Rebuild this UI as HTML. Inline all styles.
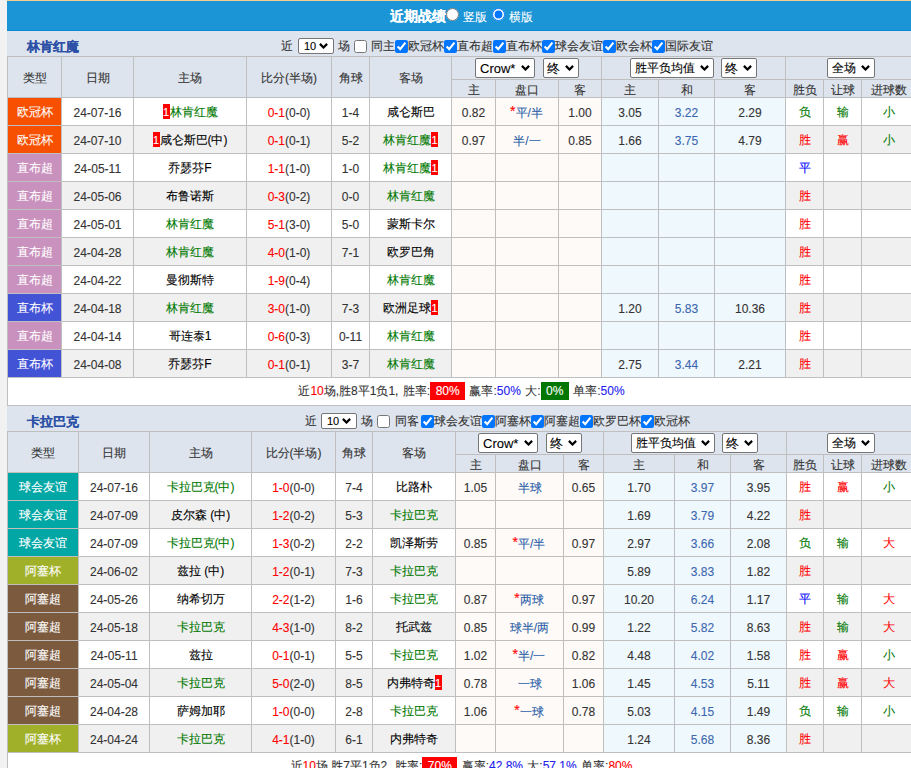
<!DOCTYPE html><html><head><meta charset="utf-8"><style>
*{box-sizing:border-box}
html,body{margin:0;padding:0;overflow:hidden}
body{width:911px;height:768px;background:#f2f2f2;font-family:"Liberation Sans",sans-serif;font-size:12px;color:#333;position:relative;-webkit-text-stroke-width:0.1px}
.topline{position:absolute;left:7px;top:0;width:910px;height:1px;background:#f6cf90}
.bar{position:absolute;left:7px;top:1px;width:910px;height:30px;background:#1b95d6;border-bottom:1px solid #0c89d2}
.title{position:absolute;left:0;top:1px;width:924px;height:30px;line-height:30px;text-align:center;color:#fff;font-size:14px}
.title b{font-weight:bold}
.grid{position:absolute;background:#bfbfbf}
.strip{position:absolute;left:7px;width:910px;background:#dde4ed}
.tname{position:absolute;left:27px;height:25px;line-height:32px;font-size:13px;font-weight:bold;color:#2c50a6}
.filters{position:absolute;left:281px;height:25px;line-height:25px;font-size:12px;color:#333;white-space:nowrap}
.c{position:absolute;text-align:center;white-space:nowrap;overflow:hidden}
.h{color:#333}
.ty{color:#fff}
.g{color:#007800}
.k{color:#000}
.r{color:#f00}
.rc{display:inline-block;background:#f00;color:#fff;width:7px;height:15px;line-height:17px;font-size:11px;text-align:center;vertical-align:top;position:relative;top:6px}
.hk{color:#2a5ea8}
.mid{color:#3c67b0}
.sum{text-align:center;word-spacing:1px}
.ab{position:absolute;white-space:nowrap}
.sl{position:absolute;color:#000;background:#fff;border:1px solid #767676;border-radius:2px;white-space:nowrap}
.chev{position:absolute}
.cb{position:absolute;margin:0;width:13px;height:13px}
.rd{position:absolute;margin:0;width:13px;height:13px}
.box{display:inline-block;color:#fff;padding:0 5.5px;line-height:18px;vertical-align:top;margin-top:4px;height:18px}
.rb{background:#f00}
.gb{background:#070}
.bl{color:#22e}
.st{font-size:14px;line-height:1px;position:relative;top:-1px;margin-left:-1px}
</style></head><body>
<div class="topline"></div><div class="bar"></div>
<span class="ab" style="left:390px;top:1px;color:#fff;font-size:14px;line-height:30px"><b>近期战绩</b></span>
<input type="radio" class="rd" style="left:446px;top:8px">
<span class="ab" style="left:463px;top:2px;color:#fff;font-size:12px;line-height:30px">竖版</span>
<input type="radio" class="rd" checked style="left:492px;top:8px">
<span class="ab" style="left:509px;top:2px;color:#fff;font-size:12px;line-height:30px">横版</span>
<div class="grid" style="left:7px;top:56px;width:910px;height:350px"></div>
<div class="strip" style="top:31px;height:25px"></div>
<div class="tname" style="top:31px">林肯红魔</div>
<span class="ab" style="left:281px;top:34px;line-height:25px">近</span>
<div class="sl" style="left:298px;top:38px;width:36px;height:16px;line-height:15px;font-size:11px"><span style="position:absolute;left:5px;top:0">10</span><svg class="chev" width="9" height="6" viewBox="0 0 9 6" style="right:5px;top:4px"><path d="M0.9 0.9 L4.5 4.5 L8.1 0.9" fill="none" stroke="#000" stroke-width="2.2"/></svg></div>
<span class="ab" style="left:338px;top:34px;line-height:25px">场</span>
<input type="checkbox" class="cb" style="left:354px;top:40px">
<span class="ab" style="left:371px;top:34px;line-height:25px">同主</span>
<input type="checkbox" class="cb" style="left:395px;top:40px" checked>
<span class="ab" style="left:408px;top:34px;line-height:25px">欧冠杯</span>
<input type="checkbox" class="cb" style="left:444px;top:40px" checked>
<span class="ab" style="left:457px;top:34px;line-height:25px">直布超</span>
<input type="checkbox" class="cb" style="left:493px;top:40px" checked>
<span class="ab" style="left:506px;top:34px;line-height:25px">直布杯</span>
<input type="checkbox" class="cb" style="left:542px;top:40px" checked>
<span class="ab" style="left:555px;top:34px;line-height:25px">球会友谊</span>
<input type="checkbox" class="cb" style="left:603px;top:40px" checked>
<span class="ab" style="left:616px;top:34px;line-height:25px">欧会杯</span>
<input type="checkbox" class="cb" style="left:652px;top:40px" checked>
<span class="ab" style="left:665px;top:34px;line-height:25px">国际友谊</span>
<div class="c h" style="left:8px;top:57px;width:53px;height:40px;line-height:42px;background:#dde4ed;">类型</div>
<div class="c h" style="left:62px;top:57px;width:71px;height:40px;line-height:42px;background:#dde4ed;">日期</div>
<div class="c h" style="left:134px;top:57px;width:112px;height:40px;line-height:42px;background:#dde4ed;">主场</div>
<div class="c h" style="left:247px;top:57px;width:84px;height:40px;line-height:42px;background:#dde4ed;">比分(半场)</div>
<div class="c h" style="left:332px;top:57px;width:37px;height:40px;line-height:42px;background:#dde4ed;">角球</div>
<div class="c h" style="left:370px;top:57px;width:81px;height:40px;line-height:42px;background:#dde4ed;">客场</div>
<div class="c h" style="left:452px;top:57px;width:149px;height:22px;line-height:24px;background:#dde4ed;"></div>
<div class="c h" style="left:602px;top:57px;width:183px;height:22px;line-height:24px;background:#dde4ed;"></div>
<div class="c h" style="left:786px;top:57px;width:129px;height:22px;line-height:24px;background:#dde4ed;"></div>
<div class="sl" style="left:475px;top:58px;width:60px;height:20px;line-height:19px;font-size:13px"><span style="position:absolute;left:4px;top:0">Crow*</span><svg class="chev" width="9" height="6" viewBox="0 0 9 6" style="right:4px;top:6px"><path d="M0.9 0.9 L4.5 4.5 L8.1 0.9" fill="none" stroke="#000" stroke-width="2.2"/></svg></div>
<div class="sl" style="left:543px;top:58px;width:36px;height:20px;line-height:19px;font-size:13px"><span style="position:absolute;left:3px;top:0">终</span><svg class="chev" width="9" height="6" viewBox="0 0 9 6" style="right:4px;top:6px"><path d="M0.9 0.9 L4.5 4.5 L8.1 0.9" fill="none" stroke="#000" stroke-width="2.2"/></svg></div>
<div class="sl" style="left:630px;top:58px;width:84px;height:20px;line-height:19px;font-size:12px"><span style="position:absolute;left:4px;top:0">胜平负均值</span><svg class="chev" width="9" height="6" viewBox="0 0 9 6" style="right:4px;top:6px"><path d="M0.9 0.9 L4.5 4.5 L8.1 0.9" fill="none" stroke="#000" stroke-width="2.2"/></svg></div>
<div class="sl" style="left:721px;top:58px;width:36px;height:20px;line-height:19px;font-size:13px"><span style="position:absolute;left:3px;top:0">终</span><svg class="chev" width="9" height="6" viewBox="0 0 9 6" style="right:4px;top:6px"><path d="M0.9 0.9 L4.5 4.5 L8.1 0.9" fill="none" stroke="#000" stroke-width="2.2"/></svg></div>
<div class="sl" style="left:827px;top:58px;width:48px;height:20px;line-height:19px;font-size:12px"><span style="position:absolute;left:4px;top:0">全场</span><svg class="chev" width="9" height="6" viewBox="0 0 9 6" style="right:4px;top:6px"><path d="M0.9 0.9 L4.5 4.5 L8.1 0.9" fill="none" stroke="#000" stroke-width="2.2"/></svg></div>
<div class="c h sh" style="left:452px;top:80px;width:43px;height:17px;line-height:21px;background:#dde4ed;">主</div>
<div class="c h sh" style="left:496px;top:80px;width:62px;height:17px;line-height:21px;background:#dde4ed;">盘口</div>
<div class="c h sh" style="left:559px;top:80px;width:42px;height:17px;line-height:21px;background:#dde4ed;">客</div>
<div class="c h sh" style="left:602px;top:80px;width:56px;height:17px;line-height:21px;background:#dde4ed;">主</div>
<div class="c h sh" style="left:659px;top:80px;width:55px;height:17px;line-height:21px;background:#dde4ed;">和</div>
<div class="c h sh" style="left:715px;top:80px;width:70px;height:17px;line-height:21px;background:#dde4ed;">客</div>
<div class="c h sh" style="left:786px;top:80px;width:37px;height:17px;line-height:21px;background:#dde4ed;">胜负</div>
<div class="c h sh" style="left:824px;top:80px;width:37px;height:17px;line-height:21px;background:#dde4ed;">让球</div>
<div class="c h sh" style="left:862px;top:80px;width:53px;height:17px;line-height:21px;background:#dde4ed;">进球数</div>
<div class="c ty" style="left:8px;top:98px;width:53px;height:27px;line-height:29px;background:#f75000;">欧冠杯</div>
<div class="c d" style="left:62px;top:98px;width:71px;height:27px;line-height:31px;background:#fff;">24-07-16</div>
<div class="c tm" style="left:134px;top:98px;width:112px;height:27px;line-height:29px;background:#fff;"><span class="g"><span class="rc">1</span>林肯红魔</span></div>
<div class="c sc" style="left:247px;top:98px;width:84px;height:27px;line-height:31px;background:#fff;"><span class="r">0-1</span>(0-0)</div>
<div class="c d" style="left:332px;top:98px;width:37px;height:27px;line-height:31px;background:#fff;">1-4</div>
<div class="c tm" style="left:370px;top:98px;width:81px;height:27px;line-height:29px;background:#fff;"><span class="k">咸仑斯巴</span></div>
<div class="c od" style="left:452px;top:98px;width:43px;height:27px;line-height:31px;background:#fefaf7;">0.82</div>
<div class="c od hk" style="left:496px;top:98px;width:62px;height:27px;line-height:30px;background:#fefaf7;"><span class="r st">*</span>平/半</div>
<div class="c od" style="left:559px;top:98px;width:42px;height:27px;line-height:31px;background:#fefaf7;">1.00</div>
<div class="c od" style="left:602px;top:98px;width:56px;height:27px;line-height:31px;background:#eff8fc;">3.05</div>
<div class="c od mid" style="left:659px;top:98px;width:55px;height:27px;line-height:31px;background:#eff8fc;">3.22</div>
<div class="c od" style="left:715px;top:98px;width:70px;height:27px;line-height:31px;background:#eff8fc;">2.29</div>
<div class="c rs" style="left:786px;top:98px;width:37px;height:27px;line-height:29px;background:#fff;"><span style="color:#007800">负</span></div>
<div class="c rs" style="left:824px;top:98px;width:37px;height:27px;line-height:29px;background:#fff;"><span style="color:#007800">输</span></div>
<div class="c rs" style="left:862px;top:98px;width:53px;height:27px;line-height:29px;background:#fff;"><span style="color:#007800">小</span></div>
<div class="c ty" style="left:8px;top:126px;width:53px;height:27px;line-height:29px;background:#f75000;">欧冠杯</div>
<div class="c d" style="left:62px;top:126px;width:71px;height:27px;line-height:31px;background:#f0f0f0;">24-07-10</div>
<div class="c tm" style="left:134px;top:126px;width:112px;height:27px;line-height:29px;background:#f0f0f0;"><span class="k"><span class="rc">1</span>咸仑斯巴(中)</span></div>
<div class="c sc" style="left:247px;top:126px;width:84px;height:27px;line-height:31px;background:#f0f0f0;"><span class="r">0-1</span>(0-1)</div>
<div class="c d" style="left:332px;top:126px;width:37px;height:27px;line-height:31px;background:#f0f0f0;">5-2</div>
<div class="c tm" style="left:370px;top:126px;width:81px;height:27px;line-height:29px;background:#f0f0f0;"><span class="g">林肯红魔<span class="rc">1</span></span></div>
<div class="c od" style="left:452px;top:126px;width:43px;height:27px;line-height:31px;background:#fefaf7;">0.97</div>
<div class="c od hk" style="left:496px;top:126px;width:62px;height:27px;line-height:30px;background:#fefaf7;">半/一</div>
<div class="c od" style="left:559px;top:126px;width:42px;height:27px;line-height:31px;background:#fefaf7;">0.85</div>
<div class="c od" style="left:602px;top:126px;width:56px;height:27px;line-height:31px;background:#eff8fc;">1.66</div>
<div class="c od mid" style="left:659px;top:126px;width:55px;height:27px;line-height:31px;background:#eff8fc;">3.75</div>
<div class="c od" style="left:715px;top:126px;width:70px;height:27px;line-height:31px;background:#eff8fc;">4.79</div>
<div class="c rs" style="left:786px;top:126px;width:37px;height:27px;line-height:29px;background:#f0f0f0;"><span style="color:#f00">胜</span></div>
<div class="c rs" style="left:824px;top:126px;width:37px;height:27px;line-height:29px;background:#f0f0f0;"><span style="color:#f00">赢</span></div>
<div class="c rs" style="left:862px;top:126px;width:53px;height:27px;line-height:29px;background:#f0f0f0;"><span style="color:#007800">小</span></div>
<div class="c ty" style="left:8px;top:154px;width:53px;height:27px;line-height:29px;background:#c991bd;">直布超</div>
<div class="c d" style="left:62px;top:154px;width:71px;height:27px;line-height:31px;background:#fff;">24-05-11</div>
<div class="c tm" style="left:134px;top:154px;width:112px;height:27px;line-height:29px;background:#fff;"><span class="k">乔瑟芬F</span></div>
<div class="c sc" style="left:247px;top:154px;width:84px;height:27px;line-height:31px;background:#fff;"><span class="r">1-1</span>(1-0)</div>
<div class="c d" style="left:332px;top:154px;width:37px;height:27px;line-height:31px;background:#fff;">1-0</div>
<div class="c tm" style="left:370px;top:154px;width:81px;height:27px;line-height:29px;background:#fff;"><span class="g">林肯红魔<span class="rc">1</span></span></div>
<div class="c od" style="left:452px;top:154px;width:43px;height:27px;line-height:31px;background:#fefaf7;"></div>
<div class="c od hk" style="left:496px;top:154px;width:62px;height:27px;line-height:30px;background:#fefaf7;"></div>
<div class="c od" style="left:559px;top:154px;width:42px;height:27px;line-height:31px;background:#fefaf7;"></div>
<div class="c od" style="left:602px;top:154px;width:56px;height:27px;line-height:31px;background:#eff8fc;"></div>
<div class="c od mid" style="left:659px;top:154px;width:55px;height:27px;line-height:31px;background:#eff8fc;"></div>
<div class="c od" style="left:715px;top:154px;width:70px;height:27px;line-height:31px;background:#eff8fc;"></div>
<div class="c rs" style="left:786px;top:154px;width:37px;height:27px;line-height:29px;background:#fff;"><span style="color:#00f">平</span></div>
<div class="c rs" style="left:824px;top:154px;width:37px;height:27px;line-height:29px;background:#fff;"><span style="color:#000"></span></div>
<div class="c rs" style="left:862px;top:154px;width:53px;height:27px;line-height:29px;background:#fff;"><span style="color:#000"></span></div>
<div class="c ty" style="left:8px;top:182px;width:53px;height:27px;line-height:29px;background:#c991bd;">直布超</div>
<div class="c d" style="left:62px;top:182px;width:71px;height:27px;line-height:31px;background:#f0f0f0;">24-05-06</div>
<div class="c tm" style="left:134px;top:182px;width:112px;height:27px;line-height:29px;background:#f0f0f0;"><span class="k">布鲁诺斯</span></div>
<div class="c sc" style="left:247px;top:182px;width:84px;height:27px;line-height:31px;background:#f0f0f0;"><span class="r">0-3</span>(0-2)</div>
<div class="c d" style="left:332px;top:182px;width:37px;height:27px;line-height:31px;background:#f0f0f0;">0-0</div>
<div class="c tm" style="left:370px;top:182px;width:81px;height:27px;line-height:29px;background:#f0f0f0;"><span class="g">林肯红魔</span></div>
<div class="c od" style="left:452px;top:182px;width:43px;height:27px;line-height:31px;background:#fefaf7;"></div>
<div class="c od hk" style="left:496px;top:182px;width:62px;height:27px;line-height:30px;background:#fefaf7;"></div>
<div class="c od" style="left:559px;top:182px;width:42px;height:27px;line-height:31px;background:#fefaf7;"></div>
<div class="c od" style="left:602px;top:182px;width:56px;height:27px;line-height:31px;background:#eff8fc;"></div>
<div class="c od mid" style="left:659px;top:182px;width:55px;height:27px;line-height:31px;background:#eff8fc;"></div>
<div class="c od" style="left:715px;top:182px;width:70px;height:27px;line-height:31px;background:#eff8fc;"></div>
<div class="c rs" style="left:786px;top:182px;width:37px;height:27px;line-height:29px;background:#f0f0f0;"><span style="color:#f00">胜</span></div>
<div class="c rs" style="left:824px;top:182px;width:37px;height:27px;line-height:29px;background:#f0f0f0;"><span style="color:#000"></span></div>
<div class="c rs" style="left:862px;top:182px;width:53px;height:27px;line-height:29px;background:#f0f0f0;"><span style="color:#000"></span></div>
<div class="c ty" style="left:8px;top:210px;width:53px;height:27px;line-height:29px;background:#c991bd;">直布超</div>
<div class="c d" style="left:62px;top:210px;width:71px;height:27px;line-height:31px;background:#fff;">24-05-01</div>
<div class="c tm" style="left:134px;top:210px;width:112px;height:27px;line-height:29px;background:#fff;"><span class="g">林肯红魔</span></div>
<div class="c sc" style="left:247px;top:210px;width:84px;height:27px;line-height:31px;background:#fff;"><span class="r">5-1</span>(3-0)</div>
<div class="c d" style="left:332px;top:210px;width:37px;height:27px;line-height:31px;background:#fff;">5-0</div>
<div class="c tm" style="left:370px;top:210px;width:81px;height:27px;line-height:29px;background:#fff;"><span class="k">蒙斯卡尔</span></div>
<div class="c od" style="left:452px;top:210px;width:43px;height:27px;line-height:31px;background:#fefaf7;"></div>
<div class="c od hk" style="left:496px;top:210px;width:62px;height:27px;line-height:30px;background:#fefaf7;"></div>
<div class="c od" style="left:559px;top:210px;width:42px;height:27px;line-height:31px;background:#fefaf7;"></div>
<div class="c od" style="left:602px;top:210px;width:56px;height:27px;line-height:31px;background:#eff8fc;"></div>
<div class="c od mid" style="left:659px;top:210px;width:55px;height:27px;line-height:31px;background:#eff8fc;"></div>
<div class="c od" style="left:715px;top:210px;width:70px;height:27px;line-height:31px;background:#eff8fc;"></div>
<div class="c rs" style="left:786px;top:210px;width:37px;height:27px;line-height:29px;background:#fff;"><span style="color:#f00">胜</span></div>
<div class="c rs" style="left:824px;top:210px;width:37px;height:27px;line-height:29px;background:#fff;"><span style="color:#000"></span></div>
<div class="c rs" style="left:862px;top:210px;width:53px;height:27px;line-height:29px;background:#fff;"><span style="color:#000"></span></div>
<div class="c ty" style="left:8px;top:238px;width:53px;height:27px;line-height:29px;background:#c991bd;">直布超</div>
<div class="c d" style="left:62px;top:238px;width:71px;height:27px;line-height:31px;background:#f0f0f0;">24-04-28</div>
<div class="c tm" style="left:134px;top:238px;width:112px;height:27px;line-height:29px;background:#f0f0f0;"><span class="g">林肯红魔</span></div>
<div class="c sc" style="left:247px;top:238px;width:84px;height:27px;line-height:31px;background:#f0f0f0;"><span class="r">4-0</span>(1-0)</div>
<div class="c d" style="left:332px;top:238px;width:37px;height:27px;line-height:31px;background:#f0f0f0;">7-1</div>
<div class="c tm" style="left:370px;top:238px;width:81px;height:27px;line-height:29px;background:#f0f0f0;"><span class="k">欧罗巴角</span></div>
<div class="c od" style="left:452px;top:238px;width:43px;height:27px;line-height:31px;background:#fefaf7;"></div>
<div class="c od hk" style="left:496px;top:238px;width:62px;height:27px;line-height:30px;background:#fefaf7;"></div>
<div class="c od" style="left:559px;top:238px;width:42px;height:27px;line-height:31px;background:#fefaf7;"></div>
<div class="c od" style="left:602px;top:238px;width:56px;height:27px;line-height:31px;background:#eff8fc;"></div>
<div class="c od mid" style="left:659px;top:238px;width:55px;height:27px;line-height:31px;background:#eff8fc;"></div>
<div class="c od" style="left:715px;top:238px;width:70px;height:27px;line-height:31px;background:#eff8fc;"></div>
<div class="c rs" style="left:786px;top:238px;width:37px;height:27px;line-height:29px;background:#f0f0f0;"><span style="color:#f00">胜</span></div>
<div class="c rs" style="left:824px;top:238px;width:37px;height:27px;line-height:29px;background:#f0f0f0;"><span style="color:#000"></span></div>
<div class="c rs" style="left:862px;top:238px;width:53px;height:27px;line-height:29px;background:#f0f0f0;"><span style="color:#000"></span></div>
<div class="c ty" style="left:8px;top:266px;width:53px;height:27px;line-height:29px;background:#c991bd;">直布超</div>
<div class="c d" style="left:62px;top:266px;width:71px;height:27px;line-height:31px;background:#fff;">24-04-22</div>
<div class="c tm" style="left:134px;top:266px;width:112px;height:27px;line-height:29px;background:#fff;"><span class="k">曼彻斯特</span></div>
<div class="c sc" style="left:247px;top:266px;width:84px;height:27px;line-height:31px;background:#fff;"><span class="r">1-9</span>(0-4)</div>
<div class="c d" style="left:332px;top:266px;width:37px;height:27px;line-height:31px;background:#fff;"></div>
<div class="c tm" style="left:370px;top:266px;width:81px;height:27px;line-height:29px;background:#fff;"><span class="g">林肯红魔</span></div>
<div class="c od" style="left:452px;top:266px;width:43px;height:27px;line-height:31px;background:#fefaf7;"></div>
<div class="c od hk" style="left:496px;top:266px;width:62px;height:27px;line-height:30px;background:#fefaf7;"></div>
<div class="c od" style="left:559px;top:266px;width:42px;height:27px;line-height:31px;background:#fefaf7;"></div>
<div class="c od" style="left:602px;top:266px;width:56px;height:27px;line-height:31px;background:#eff8fc;"></div>
<div class="c od mid" style="left:659px;top:266px;width:55px;height:27px;line-height:31px;background:#eff8fc;"></div>
<div class="c od" style="left:715px;top:266px;width:70px;height:27px;line-height:31px;background:#eff8fc;"></div>
<div class="c rs" style="left:786px;top:266px;width:37px;height:27px;line-height:29px;background:#fff;"><span style="color:#f00">胜</span></div>
<div class="c rs" style="left:824px;top:266px;width:37px;height:27px;line-height:29px;background:#fff;"><span style="color:#000"></span></div>
<div class="c rs" style="left:862px;top:266px;width:53px;height:27px;line-height:29px;background:#fff;"><span style="color:#000"></span></div>
<div class="c ty" style="left:8px;top:294px;width:53px;height:27px;line-height:29px;background:#4353d6;">直布杯</div>
<div class="c d" style="left:62px;top:294px;width:71px;height:27px;line-height:31px;background:#f0f0f0;">24-04-18</div>
<div class="c tm" style="left:134px;top:294px;width:112px;height:27px;line-height:29px;background:#f0f0f0;"><span class="g">林肯红魔</span></div>
<div class="c sc" style="left:247px;top:294px;width:84px;height:27px;line-height:31px;background:#f0f0f0;"><span class="r">3-0</span>(1-0)</div>
<div class="c d" style="left:332px;top:294px;width:37px;height:27px;line-height:31px;background:#f0f0f0;">7-3</div>
<div class="c tm" style="left:370px;top:294px;width:81px;height:27px;line-height:29px;background:#f0f0f0;"><span class="k">欧洲足球<span class="rc">1</span></span></div>
<div class="c od" style="left:452px;top:294px;width:43px;height:27px;line-height:31px;background:#fefaf7;"></div>
<div class="c od hk" style="left:496px;top:294px;width:62px;height:27px;line-height:30px;background:#fefaf7;"></div>
<div class="c od" style="left:559px;top:294px;width:42px;height:27px;line-height:31px;background:#fefaf7;"></div>
<div class="c od" style="left:602px;top:294px;width:56px;height:27px;line-height:31px;background:#eff8fc;">1.20</div>
<div class="c od mid" style="left:659px;top:294px;width:55px;height:27px;line-height:31px;background:#eff8fc;">5.83</div>
<div class="c od" style="left:715px;top:294px;width:70px;height:27px;line-height:31px;background:#eff8fc;">10.36</div>
<div class="c rs" style="left:786px;top:294px;width:37px;height:27px;line-height:29px;background:#f0f0f0;"><span style="color:#f00">胜</span></div>
<div class="c rs" style="left:824px;top:294px;width:37px;height:27px;line-height:29px;background:#f0f0f0;"><span style="color:#000"></span></div>
<div class="c rs" style="left:862px;top:294px;width:53px;height:27px;line-height:29px;background:#f0f0f0;"><span style="color:#000"></span></div>
<div class="c ty" style="left:8px;top:322px;width:53px;height:27px;line-height:29px;background:#c991bd;">直布超</div>
<div class="c d" style="left:62px;top:322px;width:71px;height:27px;line-height:31px;background:#fff;">24-04-14</div>
<div class="c tm" style="left:134px;top:322px;width:112px;height:27px;line-height:29px;background:#fff;"><span class="k">哥连泰1</span></div>
<div class="c sc" style="left:247px;top:322px;width:84px;height:27px;line-height:31px;background:#fff;"><span class="r">0-6</span>(0-3)</div>
<div class="c d" style="left:332px;top:322px;width:37px;height:27px;line-height:31px;background:#fff;">0-11</div>
<div class="c tm" style="left:370px;top:322px;width:81px;height:27px;line-height:29px;background:#fff;"><span class="g">林肯红魔</span></div>
<div class="c od" style="left:452px;top:322px;width:43px;height:27px;line-height:31px;background:#fefaf7;"></div>
<div class="c od hk" style="left:496px;top:322px;width:62px;height:27px;line-height:30px;background:#fefaf7;"></div>
<div class="c od" style="left:559px;top:322px;width:42px;height:27px;line-height:31px;background:#fefaf7;"></div>
<div class="c od" style="left:602px;top:322px;width:56px;height:27px;line-height:31px;background:#eff8fc;"></div>
<div class="c od mid" style="left:659px;top:322px;width:55px;height:27px;line-height:31px;background:#eff8fc;"></div>
<div class="c od" style="left:715px;top:322px;width:70px;height:27px;line-height:31px;background:#eff8fc;"></div>
<div class="c rs" style="left:786px;top:322px;width:37px;height:27px;line-height:29px;background:#fff;"><span style="color:#f00">胜</span></div>
<div class="c rs" style="left:824px;top:322px;width:37px;height:27px;line-height:29px;background:#fff;"><span style="color:#000"></span></div>
<div class="c rs" style="left:862px;top:322px;width:53px;height:27px;line-height:29px;background:#fff;"><span style="color:#000"></span></div>
<div class="c ty" style="left:8px;top:350px;width:53px;height:27px;line-height:29px;background:#4353d6;">直布杯</div>
<div class="c d" style="left:62px;top:350px;width:71px;height:27px;line-height:31px;background:#f0f0f0;">24-04-08</div>
<div class="c tm" style="left:134px;top:350px;width:112px;height:27px;line-height:29px;background:#f0f0f0;"><span class="k">乔瑟芬F</span></div>
<div class="c sc" style="left:247px;top:350px;width:84px;height:27px;line-height:31px;background:#f0f0f0;"><span class="r">0-1</span>(0-1)</div>
<div class="c d" style="left:332px;top:350px;width:37px;height:27px;line-height:31px;background:#f0f0f0;">3-7</div>
<div class="c tm" style="left:370px;top:350px;width:81px;height:27px;line-height:29px;background:#f0f0f0;"><span class="g">林肯红魔</span></div>
<div class="c od" style="left:452px;top:350px;width:43px;height:27px;line-height:31px;background:#fefaf7;"></div>
<div class="c od hk" style="left:496px;top:350px;width:62px;height:27px;line-height:30px;background:#fefaf7;"></div>
<div class="c od" style="left:559px;top:350px;width:42px;height:27px;line-height:31px;background:#fefaf7;"></div>
<div class="c od" style="left:602px;top:350px;width:56px;height:27px;line-height:31px;background:#eff8fc;">2.75</div>
<div class="c od mid" style="left:659px;top:350px;width:55px;height:27px;line-height:31px;background:#eff8fc;">3.44</div>
<div class="c od" style="left:715px;top:350px;width:70px;height:27px;line-height:31px;background:#eff8fc;">2.21</div>
<div class="c rs" style="left:786px;top:350px;width:37px;height:27px;line-height:29px;background:#f0f0f0;"><span style="color:#f00">胜</span></div>
<div class="c rs" style="left:824px;top:350px;width:37px;height:27px;line-height:29px;background:#f0f0f0;"><span style="color:#000"></span></div>
<div class="c rs" style="left:862px;top:350px;width:53px;height:27px;line-height:29px;background:#f0f0f0;"><span style="color:#000"></span></div>
<div class="c sum" style="left:8px;top:378px;width:907px;height:27px;line-height:29px;background:#fff;line-height:27px">近<span class="r">10</span>场,胜8平1负1, 胜率:<span class="box rb">80%</span> 赢率:<span class="bl">50%</span> 大:<span class="box gb">0%</span> 单率:<span class="bl">50%</span></div>
<div class="grid" style="left:7px;top:431px;width:910px;height:400px"></div>
<div class="strip" style="top:406px;height:25px"></div>
<div class="tname" style="top:406px">卡拉巴克</div>
<span class="ab" style="left:305px;top:409px;line-height:25px">近</span>
<div class="sl" style="left:321px;top:413px;width:36px;height:16px;line-height:15px;font-size:11px"><span style="position:absolute;left:5px;top:0">10</span><svg class="chev" width="9" height="6" viewBox="0 0 9 6" style="right:5px;top:4px"><path d="M0.9 0.9 L4.5 4.5 L8.1 0.9" fill="none" stroke="#000" stroke-width="2.2"/></svg></div>
<span class="ab" style="left:361px;top:409px;line-height:25px">场</span>
<input type="checkbox" class="cb" style="left:377px;top:415px">
<span class="ab" style="left:395px;top:409px;line-height:25px">同客</span>
<input type="checkbox" class="cb" style="left:421px;top:415px" checked>
<span class="ab" style="left:434px;top:409px;line-height:25px">球会友谊</span>
<input type="checkbox" class="cb" style="left:482px;top:415px" checked>
<span class="ab" style="left:495px;top:409px;line-height:25px">阿塞杯</span>
<input type="checkbox" class="cb" style="left:531px;top:415px" checked>
<span class="ab" style="left:544px;top:409px;line-height:25px">阿塞超</span>
<input type="checkbox" class="cb" style="left:580px;top:415px" checked>
<span class="ab" style="left:593px;top:409px;line-height:25px">欧罗巴杯</span>
<input type="checkbox" class="cb" style="left:641px;top:415px" checked>
<span class="ab" style="left:654px;top:409px;line-height:25px">欧冠杯</span>
<div class="c h" style="left:8px;top:432px;width:70px;height:40px;line-height:42px;background:#dde4ed;">类型</div>
<div class="c h" style="left:79px;top:432px;width:70px;height:40px;line-height:42px;background:#dde4ed;">日期</div>
<div class="c h" style="left:150px;top:432px;width:101px;height:40px;line-height:42px;background:#dde4ed;">主场</div>
<div class="c h" style="left:252px;top:432px;width:83px;height:40px;line-height:42px;background:#dde4ed;">比分(半场)</div>
<div class="c h" style="left:336px;top:432px;width:36px;height:40px;line-height:42px;background:#dde4ed;">角球</div>
<div class="c h" style="left:373px;top:432px;width:82px;height:40px;line-height:42px;background:#dde4ed;">客场</div>
<div class="c h" style="left:456px;top:432px;width:147px;height:22px;line-height:24px;background:#dde4ed;"></div>
<div class="c h" style="left:604px;top:432px;width:182px;height:22px;line-height:24px;background:#dde4ed;"></div>
<div class="c h" style="left:787px;top:432px;width:128px;height:22px;line-height:24px;background:#dde4ed;"></div>
<div class="sl" style="left:478px;top:433px;width:60px;height:20px;line-height:19px;font-size:13px"><span style="position:absolute;left:4px;top:0">Crow*</span><svg class="chev" width="9" height="6" viewBox="0 0 9 6" style="right:4px;top:6px"><path d="M0.9 0.9 L4.5 4.5 L8.1 0.9" fill="none" stroke="#000" stroke-width="2.2"/></svg></div>
<div class="sl" style="left:546px;top:433px;width:36px;height:20px;line-height:19px;font-size:13px"><span style="position:absolute;left:3px;top:0">终</span><svg class="chev" width="9" height="6" viewBox="0 0 9 6" style="right:4px;top:6px"><path d="M0.9 0.9 L4.5 4.5 L8.1 0.9" fill="none" stroke="#000" stroke-width="2.2"/></svg></div>
<div class="sl" style="left:631px;top:433px;width:84px;height:20px;line-height:19px;font-size:12px"><span style="position:absolute;left:4px;top:0">胜平负均值</span><svg class="chev" width="9" height="6" viewBox="0 0 9 6" style="right:4px;top:6px"><path d="M0.9 0.9 L4.5 4.5 L8.1 0.9" fill="none" stroke="#000" stroke-width="2.2"/></svg></div>
<div class="sl" style="left:722px;top:433px;width:36px;height:20px;line-height:19px;font-size:13px"><span style="position:absolute;left:3px;top:0">终</span><svg class="chev" width="9" height="6" viewBox="0 0 9 6" style="right:4px;top:6px"><path d="M0.9 0.9 L4.5 4.5 L8.1 0.9" fill="none" stroke="#000" stroke-width="2.2"/></svg></div>
<div class="sl" style="left:827px;top:433px;width:48px;height:20px;line-height:19px;font-size:12px"><span style="position:absolute;left:4px;top:0">全场</span><svg class="chev" width="9" height="6" viewBox="0 0 9 6" style="right:4px;top:6px"><path d="M0.9 0.9 L4.5 4.5 L8.1 0.9" fill="none" stroke="#000" stroke-width="2.2"/></svg></div>
<div class="c h sh" style="left:456px;top:455px;width:39px;height:17px;line-height:21px;background:#dde4ed;">主</div>
<div class="c h sh" style="left:496px;top:455px;width:67px;height:17px;line-height:21px;background:#dde4ed;">盘口</div>
<div class="c h sh" style="left:564px;top:455px;width:39px;height:17px;line-height:21px;background:#dde4ed;">客</div>
<div class="c h sh" style="left:604px;top:455px;width:70px;height:17px;line-height:21px;background:#dde4ed;">主</div>
<div class="c h sh" style="left:675px;top:455px;width:55px;height:17px;line-height:21px;background:#dde4ed;">和</div>
<div class="c h sh" style="left:731px;top:455px;width:55px;height:17px;line-height:21px;background:#dde4ed;">客</div>
<div class="c h sh" style="left:787px;top:455px;width:36px;height:17px;line-height:21px;background:#dde4ed;">胜负</div>
<div class="c h sh" style="left:824px;top:455px;width:37px;height:17px;line-height:21px;background:#dde4ed;">让球</div>
<div class="c h sh" style="left:862px;top:455px;width:53px;height:17px;line-height:21px;background:#dde4ed;">进球数</div>
<div class="c ty" style="left:8px;top:473px;width:70px;height:27px;line-height:29px;background:#00a7a5;">球会友谊</div>
<div class="c d" style="left:79px;top:473px;width:70px;height:27px;line-height:31px;background:#fff;">24-07-16</div>
<div class="c tm" style="left:150px;top:473px;width:101px;height:27px;line-height:29px;background:#fff;"><span class="g">卡拉巴克(中)</span></div>
<div class="c sc" style="left:252px;top:473px;width:83px;height:27px;line-height:31px;background:#fff;"><span class="r">1-0</span>(0-0)</div>
<div class="c d" style="left:336px;top:473px;width:36px;height:27px;line-height:31px;background:#fff;">7-4</div>
<div class="c tm" style="left:373px;top:473px;width:82px;height:27px;line-height:29px;background:#fff;"><span class="k">比路朴</span></div>
<div class="c od" style="left:456px;top:473px;width:39px;height:27px;line-height:31px;background:#fefaf7;">1.05</div>
<div class="c od hk" style="left:496px;top:473px;width:67px;height:27px;line-height:30px;background:#fefaf7;">半球</div>
<div class="c od" style="left:564px;top:473px;width:39px;height:27px;line-height:31px;background:#fefaf7;">0.65</div>
<div class="c od" style="left:604px;top:473px;width:70px;height:27px;line-height:31px;background:#eff8fc;">1.70</div>
<div class="c od mid" style="left:675px;top:473px;width:55px;height:27px;line-height:31px;background:#eff8fc;">3.97</div>
<div class="c od" style="left:731px;top:473px;width:55px;height:27px;line-height:31px;background:#eff8fc;">3.95</div>
<div class="c rs" style="left:787px;top:473px;width:36px;height:27px;line-height:29px;background:#fff;"><span style="color:#f00">胜</span></div>
<div class="c rs" style="left:824px;top:473px;width:37px;height:27px;line-height:29px;background:#fff;"><span style="color:#f00">赢</span></div>
<div class="c rs" style="left:862px;top:473px;width:53px;height:27px;line-height:29px;background:#fff;"><span style="color:#007800">小</span></div>
<div class="c ty" style="left:8px;top:501px;width:70px;height:27px;line-height:29px;background:#00a7a5;">球会友谊</div>
<div class="c d" style="left:79px;top:501px;width:70px;height:27px;line-height:31px;background:#f0f0f0;">24-07-09</div>
<div class="c tm" style="left:150px;top:501px;width:101px;height:27px;line-height:29px;background:#f0f0f0;"><span class="k">皮尔森 (中)</span></div>
<div class="c sc" style="left:252px;top:501px;width:83px;height:27px;line-height:31px;background:#f0f0f0;"><span class="r">1-2</span>(0-2)</div>
<div class="c d" style="left:336px;top:501px;width:36px;height:27px;line-height:31px;background:#f0f0f0;">5-3</div>
<div class="c tm" style="left:373px;top:501px;width:82px;height:27px;line-height:29px;background:#f0f0f0;"><span class="g">卡拉巴克</span></div>
<div class="c od" style="left:456px;top:501px;width:39px;height:27px;line-height:31px;background:#fefaf7;"></div>
<div class="c od hk" style="left:496px;top:501px;width:67px;height:27px;line-height:30px;background:#fefaf7;"></div>
<div class="c od" style="left:564px;top:501px;width:39px;height:27px;line-height:31px;background:#fefaf7;"></div>
<div class="c od" style="left:604px;top:501px;width:70px;height:27px;line-height:31px;background:#eff8fc;">1.69</div>
<div class="c od mid" style="left:675px;top:501px;width:55px;height:27px;line-height:31px;background:#eff8fc;">3.79</div>
<div class="c od" style="left:731px;top:501px;width:55px;height:27px;line-height:31px;background:#eff8fc;">4.22</div>
<div class="c rs" style="left:787px;top:501px;width:36px;height:27px;line-height:29px;background:#f0f0f0;"><span style="color:#f00">胜</span></div>
<div class="c rs" style="left:824px;top:501px;width:37px;height:27px;line-height:29px;background:#f0f0f0;"><span style="color:#000"></span></div>
<div class="c rs" style="left:862px;top:501px;width:53px;height:27px;line-height:29px;background:#f0f0f0;"><span style="color:#000"></span></div>
<div class="c ty" style="left:8px;top:529px;width:70px;height:27px;line-height:29px;background:#00a7a5;">球会友谊</div>
<div class="c d" style="left:79px;top:529px;width:70px;height:27px;line-height:31px;background:#fff;">24-07-09</div>
<div class="c tm" style="left:150px;top:529px;width:101px;height:27px;line-height:29px;background:#fff;"><span class="g">卡拉巴克(中)</span></div>
<div class="c sc" style="left:252px;top:529px;width:83px;height:27px;line-height:31px;background:#fff;"><span class="r">1-3</span>(0-2)</div>
<div class="c d" style="left:336px;top:529px;width:36px;height:27px;line-height:31px;background:#fff;">2-2</div>
<div class="c tm" style="left:373px;top:529px;width:82px;height:27px;line-height:29px;background:#fff;"><span class="k">凯泽斯劳</span></div>
<div class="c od" style="left:456px;top:529px;width:39px;height:27px;line-height:31px;background:#fefaf7;">0.85</div>
<div class="c od hk" style="left:496px;top:529px;width:67px;height:27px;line-height:30px;background:#fefaf7;"><span class="r st">*</span>平/半</div>
<div class="c od" style="left:564px;top:529px;width:39px;height:27px;line-height:31px;background:#fefaf7;">0.97</div>
<div class="c od" style="left:604px;top:529px;width:70px;height:27px;line-height:31px;background:#eff8fc;">2.97</div>
<div class="c od mid" style="left:675px;top:529px;width:55px;height:27px;line-height:31px;background:#eff8fc;">3.66</div>
<div class="c od" style="left:731px;top:529px;width:55px;height:27px;line-height:31px;background:#eff8fc;">2.08</div>
<div class="c rs" style="left:787px;top:529px;width:36px;height:27px;line-height:29px;background:#fff;"><span style="color:#007800">负</span></div>
<div class="c rs" style="left:824px;top:529px;width:37px;height:27px;line-height:29px;background:#fff;"><span style="color:#007800">输</span></div>
<div class="c rs" style="left:862px;top:529px;width:53px;height:27px;line-height:29px;background:#fff;"><span style="color:#f00">大</span></div>
<div class="c ty" style="left:8px;top:557px;width:70px;height:27px;line-height:29px;background:#a0b129;">阿塞杯</div>
<div class="c d" style="left:79px;top:557px;width:70px;height:27px;line-height:31px;background:#f0f0f0;">24-06-02</div>
<div class="c tm" style="left:150px;top:557px;width:101px;height:27px;line-height:29px;background:#f0f0f0;"><span class="k">兹拉 (中)</span></div>
<div class="c sc" style="left:252px;top:557px;width:83px;height:27px;line-height:31px;background:#f0f0f0;"><span class="r">1-2</span>(0-1)</div>
<div class="c d" style="left:336px;top:557px;width:36px;height:27px;line-height:31px;background:#f0f0f0;">7-3</div>
<div class="c tm" style="left:373px;top:557px;width:82px;height:27px;line-height:29px;background:#f0f0f0;"><span class="g">卡拉巴克</span></div>
<div class="c od" style="left:456px;top:557px;width:39px;height:27px;line-height:31px;background:#fefaf7;"></div>
<div class="c od hk" style="left:496px;top:557px;width:67px;height:27px;line-height:30px;background:#fefaf7;"></div>
<div class="c od" style="left:564px;top:557px;width:39px;height:27px;line-height:31px;background:#fefaf7;"></div>
<div class="c od" style="left:604px;top:557px;width:70px;height:27px;line-height:31px;background:#eff8fc;">5.89</div>
<div class="c od mid" style="left:675px;top:557px;width:55px;height:27px;line-height:31px;background:#eff8fc;">3.83</div>
<div class="c od" style="left:731px;top:557px;width:55px;height:27px;line-height:31px;background:#eff8fc;">1.82</div>
<div class="c rs" style="left:787px;top:557px;width:36px;height:27px;line-height:29px;background:#f0f0f0;"><span style="color:#f00">胜</span></div>
<div class="c rs" style="left:824px;top:557px;width:37px;height:27px;line-height:29px;background:#f0f0f0;"><span style="color:#000"></span></div>
<div class="c rs" style="left:862px;top:557px;width:53px;height:27px;line-height:29px;background:#f0f0f0;"><span style="color:#000"></span></div>
<div class="c ty" style="left:8px;top:585px;width:70px;height:27px;line-height:29px;background:#7b5a3e;">阿塞超</div>
<div class="c d" style="left:79px;top:585px;width:70px;height:27px;line-height:31px;background:#fff;">24-05-26</div>
<div class="c tm" style="left:150px;top:585px;width:101px;height:27px;line-height:29px;background:#fff;"><span class="k">纳希切万</span></div>
<div class="c sc" style="left:252px;top:585px;width:83px;height:27px;line-height:31px;background:#fff;"><span class="r">2-2</span>(1-2)</div>
<div class="c d" style="left:336px;top:585px;width:36px;height:27px;line-height:31px;background:#fff;">1-6</div>
<div class="c tm" style="left:373px;top:585px;width:82px;height:27px;line-height:29px;background:#fff;"><span class="g">卡拉巴克</span></div>
<div class="c od" style="left:456px;top:585px;width:39px;height:27px;line-height:31px;background:#fefaf7;">0.87</div>
<div class="c od hk" style="left:496px;top:585px;width:67px;height:27px;line-height:30px;background:#fefaf7;"><span class="r st">*</span>两球</div>
<div class="c od" style="left:564px;top:585px;width:39px;height:27px;line-height:31px;background:#fefaf7;">0.97</div>
<div class="c od" style="left:604px;top:585px;width:70px;height:27px;line-height:31px;background:#eff8fc;">10.20</div>
<div class="c od mid" style="left:675px;top:585px;width:55px;height:27px;line-height:31px;background:#eff8fc;">6.24</div>
<div class="c od" style="left:731px;top:585px;width:55px;height:27px;line-height:31px;background:#eff8fc;">1.17</div>
<div class="c rs" style="left:787px;top:585px;width:36px;height:27px;line-height:29px;background:#fff;"><span style="color:#00f">平</span></div>
<div class="c rs" style="left:824px;top:585px;width:37px;height:27px;line-height:29px;background:#fff;"><span style="color:#007800">输</span></div>
<div class="c rs" style="left:862px;top:585px;width:53px;height:27px;line-height:29px;background:#fff;"><span style="color:#f00">大</span></div>
<div class="c ty" style="left:8px;top:613px;width:70px;height:27px;line-height:29px;background:#7b5a3e;">阿塞超</div>
<div class="c d" style="left:79px;top:613px;width:70px;height:27px;line-height:31px;background:#f0f0f0;">24-05-18</div>
<div class="c tm" style="left:150px;top:613px;width:101px;height:27px;line-height:29px;background:#f0f0f0;"><span class="g">卡拉巴克</span></div>
<div class="c sc" style="left:252px;top:613px;width:83px;height:27px;line-height:31px;background:#f0f0f0;"><span class="r">4-3</span>(1-0)</div>
<div class="c d" style="left:336px;top:613px;width:36px;height:27px;line-height:31px;background:#f0f0f0;">8-2</div>
<div class="c tm" style="left:373px;top:613px;width:82px;height:27px;line-height:29px;background:#f0f0f0;"><span class="k">托武兹</span></div>
<div class="c od" style="left:456px;top:613px;width:39px;height:27px;line-height:31px;background:#fefaf7;">0.85</div>
<div class="c od hk" style="left:496px;top:613px;width:67px;height:27px;line-height:30px;background:#fefaf7;">球半/两</div>
<div class="c od" style="left:564px;top:613px;width:39px;height:27px;line-height:31px;background:#fefaf7;">0.99</div>
<div class="c od" style="left:604px;top:613px;width:70px;height:27px;line-height:31px;background:#eff8fc;">1.22</div>
<div class="c od mid" style="left:675px;top:613px;width:55px;height:27px;line-height:31px;background:#eff8fc;">5.82</div>
<div class="c od" style="left:731px;top:613px;width:55px;height:27px;line-height:31px;background:#eff8fc;">8.63</div>
<div class="c rs" style="left:787px;top:613px;width:36px;height:27px;line-height:29px;background:#f0f0f0;"><span style="color:#f00">胜</span></div>
<div class="c rs" style="left:824px;top:613px;width:37px;height:27px;line-height:29px;background:#f0f0f0;"><span style="color:#007800">输</span></div>
<div class="c rs" style="left:862px;top:613px;width:53px;height:27px;line-height:29px;background:#f0f0f0;"><span style="color:#f00">大</span></div>
<div class="c ty" style="left:8px;top:641px;width:70px;height:27px;line-height:29px;background:#7b5a3e;">阿塞超</div>
<div class="c d" style="left:79px;top:641px;width:70px;height:27px;line-height:31px;background:#fff;">24-05-11</div>
<div class="c tm" style="left:150px;top:641px;width:101px;height:27px;line-height:29px;background:#fff;"><span class="k">兹拉</span></div>
<div class="c sc" style="left:252px;top:641px;width:83px;height:27px;line-height:31px;background:#fff;"><span class="r">0-1</span>(0-1)</div>
<div class="c d" style="left:336px;top:641px;width:36px;height:27px;line-height:31px;background:#fff;">5-5</div>
<div class="c tm" style="left:373px;top:641px;width:82px;height:27px;line-height:29px;background:#fff;"><span class="g">卡拉巴克</span></div>
<div class="c od" style="left:456px;top:641px;width:39px;height:27px;line-height:31px;background:#fefaf7;">1.02</div>
<div class="c od hk" style="left:496px;top:641px;width:67px;height:27px;line-height:30px;background:#fefaf7;"><span class="r st">*</span>半/一</div>
<div class="c od" style="left:564px;top:641px;width:39px;height:27px;line-height:31px;background:#fefaf7;">0.82</div>
<div class="c od" style="left:604px;top:641px;width:70px;height:27px;line-height:31px;background:#eff8fc;">4.48</div>
<div class="c od mid" style="left:675px;top:641px;width:55px;height:27px;line-height:31px;background:#eff8fc;">4.02</div>
<div class="c od" style="left:731px;top:641px;width:55px;height:27px;line-height:31px;background:#eff8fc;">1.58</div>
<div class="c rs" style="left:787px;top:641px;width:36px;height:27px;line-height:29px;background:#fff;"><span style="color:#f00">胜</span></div>
<div class="c rs" style="left:824px;top:641px;width:37px;height:27px;line-height:29px;background:#fff;"><span style="color:#f00">赢</span></div>
<div class="c rs" style="left:862px;top:641px;width:53px;height:27px;line-height:29px;background:#fff;"><span style="color:#007800">小</span></div>
<div class="c ty" style="left:8px;top:669px;width:70px;height:27px;line-height:29px;background:#7b5a3e;">阿塞超</div>
<div class="c d" style="left:79px;top:669px;width:70px;height:27px;line-height:31px;background:#f0f0f0;">24-05-04</div>
<div class="c tm" style="left:150px;top:669px;width:101px;height:27px;line-height:29px;background:#f0f0f0;"><span class="g">卡拉巴克</span></div>
<div class="c sc" style="left:252px;top:669px;width:83px;height:27px;line-height:31px;background:#f0f0f0;"><span class="r">5-0</span>(2-0)</div>
<div class="c d" style="left:336px;top:669px;width:36px;height:27px;line-height:31px;background:#f0f0f0;">8-5</div>
<div class="c tm" style="left:373px;top:669px;width:82px;height:27px;line-height:29px;background:#f0f0f0;"><span class="k">内弗特奇<span class="rc">1</span></span></div>
<div class="c od" style="left:456px;top:669px;width:39px;height:27px;line-height:31px;background:#fefaf7;">0.78</div>
<div class="c od hk" style="left:496px;top:669px;width:67px;height:27px;line-height:30px;background:#fefaf7;">一球</div>
<div class="c od" style="left:564px;top:669px;width:39px;height:27px;line-height:31px;background:#fefaf7;">1.06</div>
<div class="c od" style="left:604px;top:669px;width:70px;height:27px;line-height:31px;background:#eff8fc;">1.45</div>
<div class="c od mid" style="left:675px;top:669px;width:55px;height:27px;line-height:31px;background:#eff8fc;">4.53</div>
<div class="c od" style="left:731px;top:669px;width:55px;height:27px;line-height:31px;background:#eff8fc;">5.11</div>
<div class="c rs" style="left:787px;top:669px;width:36px;height:27px;line-height:29px;background:#f0f0f0;"><span style="color:#f00">胜</span></div>
<div class="c rs" style="left:824px;top:669px;width:37px;height:27px;line-height:29px;background:#f0f0f0;"><span style="color:#f00">赢</span></div>
<div class="c rs" style="left:862px;top:669px;width:53px;height:27px;line-height:29px;background:#f0f0f0;"><span style="color:#f00">大</span></div>
<div class="c ty" style="left:8px;top:697px;width:70px;height:27px;line-height:29px;background:#7b5a3e;">阿塞超</div>
<div class="c d" style="left:79px;top:697px;width:70px;height:27px;line-height:31px;background:#fff;">24-04-28</div>
<div class="c tm" style="left:150px;top:697px;width:101px;height:27px;line-height:29px;background:#fff;"><span class="k">萨姆加耶</span></div>
<div class="c sc" style="left:252px;top:697px;width:83px;height:27px;line-height:31px;background:#fff;"><span class="r">1-0</span>(0-0)</div>
<div class="c d" style="left:336px;top:697px;width:36px;height:27px;line-height:31px;background:#fff;">2-8</div>
<div class="c tm" style="left:373px;top:697px;width:82px;height:27px;line-height:29px;background:#fff;"><span class="g">卡拉巴克</span></div>
<div class="c od" style="left:456px;top:697px;width:39px;height:27px;line-height:31px;background:#fefaf7;">1.06</div>
<div class="c od hk" style="left:496px;top:697px;width:67px;height:27px;line-height:30px;background:#fefaf7;"><span class="r st">*</span>一球</div>
<div class="c od" style="left:564px;top:697px;width:39px;height:27px;line-height:31px;background:#fefaf7;">0.78</div>
<div class="c od" style="left:604px;top:697px;width:70px;height:27px;line-height:31px;background:#eff8fc;">5.03</div>
<div class="c od mid" style="left:675px;top:697px;width:55px;height:27px;line-height:31px;background:#eff8fc;">4.15</div>
<div class="c od" style="left:731px;top:697px;width:55px;height:27px;line-height:31px;background:#eff8fc;">1.49</div>
<div class="c rs" style="left:787px;top:697px;width:36px;height:27px;line-height:29px;background:#fff;"><span style="color:#007800">负</span></div>
<div class="c rs" style="left:824px;top:697px;width:37px;height:27px;line-height:29px;background:#fff;"><span style="color:#007800">输</span></div>
<div class="c rs" style="left:862px;top:697px;width:53px;height:27px;line-height:29px;background:#fff;"><span style="color:#007800">小</span></div>
<div class="c ty" style="left:8px;top:725px;width:70px;height:27px;line-height:29px;background:#a0b129;">阿塞杯</div>
<div class="c d" style="left:79px;top:725px;width:70px;height:27px;line-height:31px;background:#f0f0f0;">24-04-24</div>
<div class="c tm" style="left:150px;top:725px;width:101px;height:27px;line-height:29px;background:#f0f0f0;"><span class="g">卡拉巴克</span></div>
<div class="c sc" style="left:252px;top:725px;width:83px;height:27px;line-height:31px;background:#f0f0f0;"><span class="r">4-1</span>(1-0)</div>
<div class="c d" style="left:336px;top:725px;width:36px;height:27px;line-height:31px;background:#f0f0f0;">6-1</div>
<div class="c tm" style="left:373px;top:725px;width:82px;height:27px;line-height:29px;background:#f0f0f0;"><span class="k">内弗特奇</span></div>
<div class="c od" style="left:456px;top:725px;width:39px;height:27px;line-height:31px;background:#fefaf7;"></div>
<div class="c od hk" style="left:496px;top:725px;width:67px;height:27px;line-height:30px;background:#fefaf7;"></div>
<div class="c od" style="left:564px;top:725px;width:39px;height:27px;line-height:31px;background:#fefaf7;"></div>
<div class="c od" style="left:604px;top:725px;width:70px;height:27px;line-height:31px;background:#eff8fc;">1.24</div>
<div class="c od mid" style="left:675px;top:725px;width:55px;height:27px;line-height:31px;background:#eff8fc;">5.68</div>
<div class="c od" style="left:731px;top:725px;width:55px;height:27px;line-height:31px;background:#eff8fc;">8.36</div>
<div class="c rs" style="left:787px;top:725px;width:36px;height:27px;line-height:29px;background:#f0f0f0;"><span style="color:#f00">胜</span></div>
<div class="c rs" style="left:824px;top:725px;width:37px;height:27px;line-height:29px;background:#f0f0f0;"><span style="color:#000"></span></div>
<div class="c rs" style="left:862px;top:725px;width:53px;height:27px;line-height:29px;background:#f0f0f0;"><span style="color:#000"></span></div>
<div class="c sum" style="left:8px;top:753px;width:907px;height:27px;line-height:29px;background:#fff;line-height:27px">近<span class="r">10</span>场,胜7平1负2, 胜率:<span class="box rb">70%</span> 赢率:<span class="bl">42.8%</span> 大:<span class="bl">57.1%</span> 单率:<span class="r">80%</span></div>
</body></html>
